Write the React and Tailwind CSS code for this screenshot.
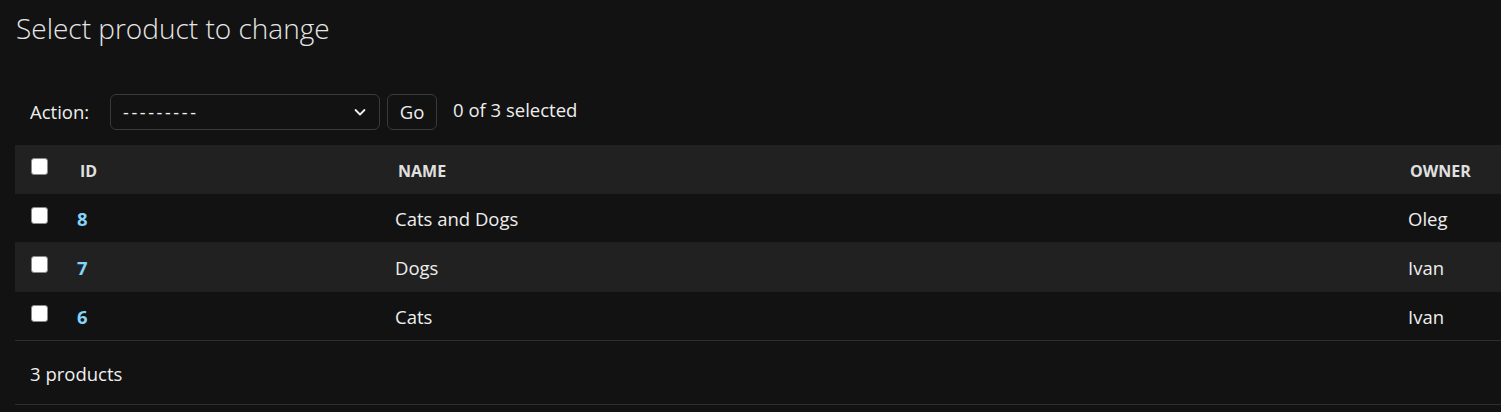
import React from "react";

const rows = [
  { id: 8, name: "Cats and Dogs", owner: "Oleg" },
  { id: 7, name: "Dogs", owner: "Ivan" },
  { id: 6, name: "Cats", owner: "Ivan" },
];

const Checkbox = () => (
  <div className="w-[17px] h-[17px] mb-[6px] rounded-[3px] bg-white border border-[#8a8a8a]" />
);

const App = () => {
  return (
    <div
      className="min-h-[412px] w-full bg-[#121212] text-[#eeeeee] overflow-hidden"
      style={{ fontFamily: '"Open Sans", "Noto Sans", sans-serif' }}
    >
      <h1 className="pl-[16px] pt-[9px] text-[28px] font-light text-[#e6e6e6] leading-[38px]">
        Select product to change
      </h1>

      {/* actions bar */}
      <div className="flex items-center mt-[47px] pl-[30px] h-[36px]">
        <span className="text-[18.5px] w-[80px]">Action:</span>
        <div className="flex items-center justify-between w-[270px] h-[36px] border border-[#3a3a3a] rounded-[6px] pl-[12px] pr-[12px]">
          <span className="text-[18px] tracking-[2.6px]">---------</span>
          <svg width="14" height="14" viewBox="0 0 14 14" fill="none">
            <path d="M2.5 5l4.5 4.5L11.5 5" stroke="#eeeeee" strokeWidth="1.8" strokeLinecap="round" strokeLinejoin="round" />
          </svg>
        </div>
        <button className="ml-[7px] w-[50px] h-[36px] border border-[#3a3a3a] rounded-[6px] text-[18.5px] text-[#eeeeee]">
          Go
        </button>
        <span className="ml-[16px] text-[18.5px] -mt-[4px]">0 of 3 selected</span>
      </div>

      {/* table */}
      <div className="ml-[15px] mt-[15px]">
        <div className="flex items-center h-[48px] bg-[#212121] text-[16px] font-bold text-[#e0e0e0]">
          <div className="w-[50px] pl-[16px] flex items-center">
            <Checkbox />
          </div>
          <div className="w-[318px] pl-[15px] pt-[4px]">ID</div>
          <div className="w-[1013px] pl-[15px] pt-[4px]">NAME</div>
          <div className="flex-1 pl-[14px] pt-[4px]">OWNER</div>
        </div>
        {rows.map((r, i) => (
          <div
            key={r.id}
            className={`flex items-center h-[49px] border-t border-[#1f1f1f] text-[18.5px] ${
              i % 2 === 1 ? "bg-[#212121]" : "bg-[#121212]"
            }`}
          >
            <div className="w-[50px] pl-[16px] flex items-center">
              <Checkbox />
            </div>
            <div className="w-[318px] pl-[12px] pt-[2px] font-bold text-[#81d4fa]">{r.id}</div>
            <div className="w-[1013px] pl-[12px] pt-[2px]">{r.name}</div>
            <div className="flex-1 pl-[12px] pt-[2px]">{r.owner}</div>
          </div>
        ))}
        <div className="border-t border-[#2e2e2e] border-b h-[65px] flex items-center pl-[15px] pt-[2px] text-[18.5px]">
          3 products
        </div>
      </div>
    </div>
  );
};

export default App;
